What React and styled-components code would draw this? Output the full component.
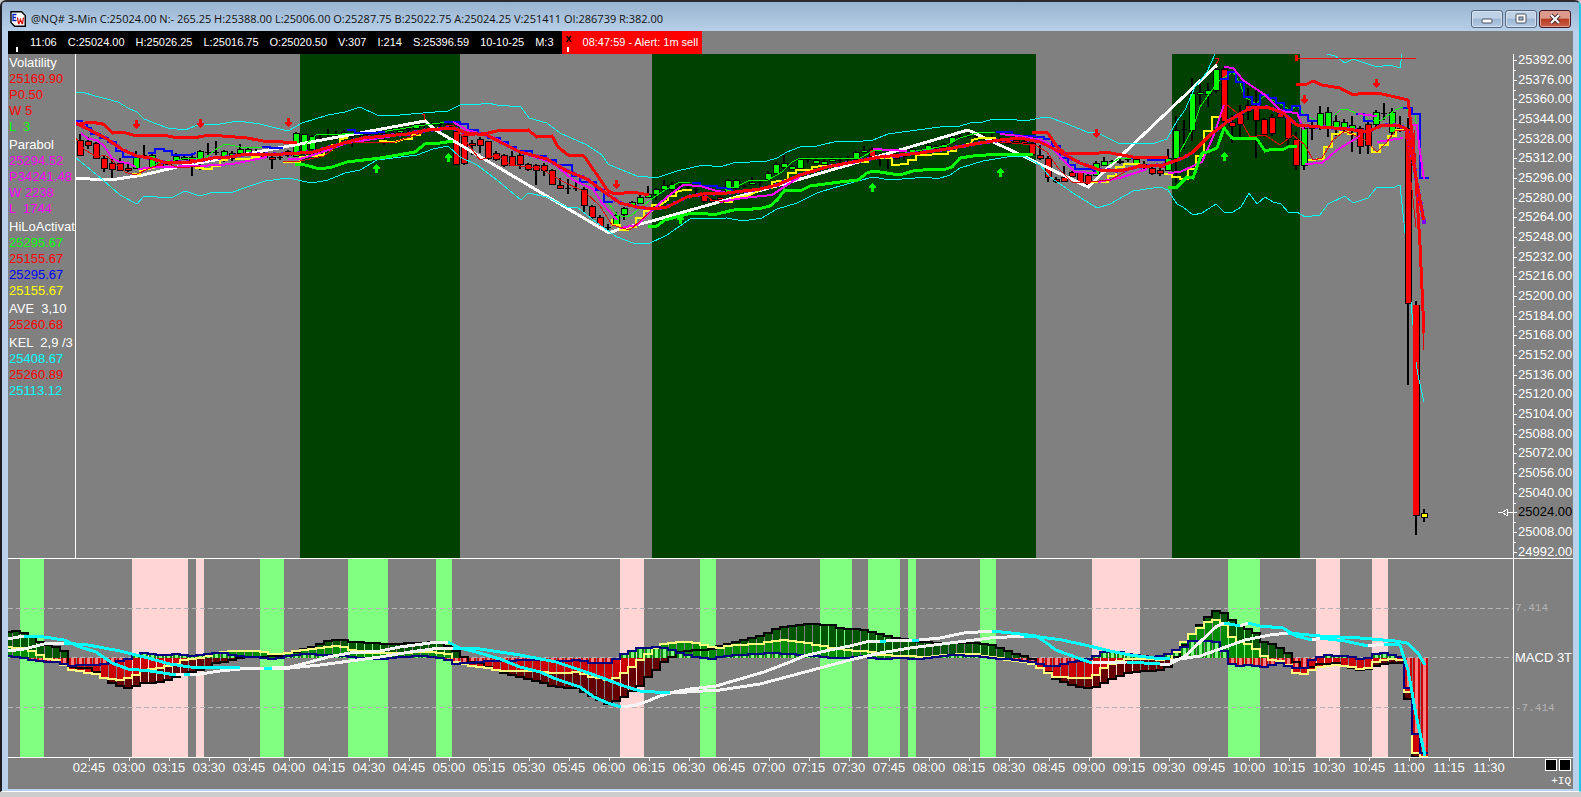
import React from 'react';
import styled, { createGlobalStyle } from 'styled-components';

const GlobalStyle = createGlobalStyle`
    * { box-sizing: border-box; }
    body {
        margin: 0;
        background: #cdcdcd;
        font-family: "Liberation Sans", Arial, sans-serif;
    }
    ul { margin: 0; padding: 0; list-style: none; }
`

const ticker = ['11:06', 'C:25024.00', 'H:25026.25', 'L:25016.75', 'O:25020.50', 'V:307', 'I:214', 'S:25396.59', '10-10-25', 'M:3'];

const studies = [
    { name: 'Volatility', rows: [['25169.90', '#f00'], ['P0.50', '#f00'], ['W 5', '#f00'], ['L  3', '#0f0']] },
    { name: 'Parabol', rows: [['25294.52', '#f0f'], ['P34241.48', '#f0f'], ['W 2238', '#f0f'], ['L  1744', '#f0f']] },
    { name: 'HiLoActivat', rows: [['25295.67', '#0f0'], ['25155.67', '#f00'], ['25295.67', '#00f'], ['25155.67', '#ff0']] },
    { name: 'AVE  3,10', rows: [['25260.68', '#f00']] },
    { name: 'KEL  2,9 /3', rows: [['25408.67', '#0ff'], ['25260.89', '#f00'], ['25113.12', '#0ff']] },
];

const prices = Array.from({ length: 26 }, (_, i) => 25392 - i * 16);

const times = Array.from({ length: 36 }, (_, i) => {
    const m = 165 + i * 15;
    return String(Math.floor(m / 60)).padStart(2, '0') + ':' + String(m % 60).padStart(2, '0');
});

// x, high, low, body top, body bottom, g(reen) / r(ed) / y(ellow) / d(oji)
const candles = `80 134 156 140 155 r|88 137 149 141 145 r|96 142 159 143 158 r|104 155 172 158 168 r|112 158 178 163 169 r|120 158 171 163 170 r|128 163 172 168 170 r|136 151 168 157 168 g|144 145 157 155 156 d|152 154 167 155 167 g|160 160 167 162 167 r|168 160 165 161 164 g|176 153 160 156 160 g|184 155 160 157 159 g|192 153 176 157 165 r|200 150 170 151 160 g|208 143 155 152 153 d|216 141 155 152 153 d|224 150 162 151 160 g|232 151 161 153 158 g|240 144 154 149 153 g|248 148 153 149 152 g|256 149 156 152 153 d|264 149 158 154 157 r|272 155 169 157 159 r|280 155 160 157 158 d|288 150 157 151 155 g|296 132 157 133 156 g|304 134 152 134 151 g|312 135 150 136 149 g|320 134 142 137 138 d|328 129 138 134 135 d|336 131 140 134 135 d|344 130 137 132 134 g|352 133 147 135 137 d|360 131 138 133 135 g|368 131 138 134 135 d|376 131 137 132 134 d|384 131 145 133 135 d|392 129 136 132 133 d|400 128 135 130 132 g|408 125 132 128 130 d|416 123 129 124 128 g|424 122 128 124 126 d|432 122 129 125 126 d|440 122 128 124 125 d|448 122 128 124 126 r|456 130 164 131 164 r|464 135 165 136 163 r|472 140 155 143 145 r|480 137 153 139 145 r|488 141 160 141 158 r|496 151 161 153 159 r|504 154 167 155 165 r|512 151 166 156 165 r|520 153 169 155 164 r|528 163 171 164 169 r|536 164 185 165 170 r|544 163 176 165 170 r|552 169 185 170 184 r|560 178 189 185 188 r|568 179 194 188 189 d|576 180 191 188 189 d|584 187 212 189 205 r|592 205 219 206 217 r|600 215 227 217 226 r|608 224 232 227 228 d|616 212 225 215 225 g|624 207 220 208 214 g|632 201 206 202 205 g|640 195 204 197 203 g|648 186 197 194 197 g|656 188 200 189 194 g|664 180 190 185 189 g|672 182 191 184 189 g|680 183 190 186 188 d|688 184 190 187 188 d|696 186 195 189 190 d|704 192 203 195 201 r|712 198 202 199 201 r|720 196 200 197 199 r|728 179 194 180 193 g|736 179 190 180 188 g|744 185 188 186 187 d|752 177 185 182 184 g|760 180 186 182 183 d|768 171 180 173 179 g|776 162 174 164 173 g|784 155 169 163 167 g|792 165 170 166 169 g|800 157 171 159 168 g|808 157 163 159 160 d|816 157 163 160 163 g|824 158 165 161 164 g|832 157 162 159 161 g|840 157 163 160 161 d|848 156 162 159 160 d|856 151 161 152 159 g|864 146 153 150 152 g|872 147 157 149 156 r|880 153 166 156 157 d|888 152 169 156 157 d|896 153 160 156 158 r|904 153 160 156 157 d|912 148 155 149 154 g|920 150 155 152 153 d|928 144 152 145 151 g|936 145 149 146 148 d|944 143 148 144 147 g|952 136 143 137 142 g|960 134 139 136 137 d|968 131 138 136 137 d|976 133 138 136 137 d|984 134 140 137 138 d|992 134 140 137 138 d|1000 137 143 139 141 r|1008 139 145 140 143 r|1016 139 143 140 142 r|1024 140 144 141 143 r|1032 142 154 143 154 r|1040 145 160 155 158 r|1048 156 182 158 177 r|1056 177 183 179 181 r|1064 166 182 177 181 r|1072 171 177 172 176 r|1080 172 182 172 182 r|1088 174 185 175 184 r|1096 161 176 163 175 g|1104 157 165 161 165 g|1112 160 165 161 162 d|1120 159 164 161 162 g|1128 157 162 159 160 d|1136 157 165 159 163 g|1144 161 170 164 165 d|1152 167 175 168 173 r|1160 168 176 170 173 r|1168 149 171 158 170 g|1176 116 183 130 158 g|1184 120 149 129 130 d|1192 78 141 93 130 g|1200 78 105 92 94 g|1208 83 107 90 94 g|1216 66 93 69 90 g|1224 67 123 69 121 r|1232 115 143 122 126 r|1240 105 138 114 124 r|1248 88 120 105 111 r|1256 90 158 107 120 r|1264 118 137 119 134 r|1272 114 136 117 133 r|1280 108 118 113 117 r|1288 115 145 118 138 r|1296 132 170 139 165 r|1304 125 170 128 165 g|1312 122 140 128 129 d|1320 106 130 113 127 g|1328 107 137 112 127 g|1336 115 136 121 127 g|1344 119 132 122 127 g|1352 116 152 125 129 g|1360 126 154 128 146 r|1368 122 154 124 145 r|1376 110 129 112 124 g|1384 103 120 113 114 d|1392 108 135 112 132 g|1400 116 132 128 129 d|1408 118 385 128 303 r|1416 301 535 305 515 r|1424 509 522 513 517 y`
    .split('|').map((c) => c.split(' '));

const fills = { g: '#00ff00', r: '#ff0000', y: '#ffff00', d: '#000' };

const keltner = [
    '75,92 82,92 95,96 107,99 118,102 128,108 137,112 144,119 157,124 168,128 185,130 200,124 220,124 238,121 260,124 272,127 288,131 302,123 328,115 345,112 360,107 377,115 400,115 423,113 448,111 462,104 475,105 488,103 497,105 521,107 529,118 547,123 560,133 587,145 602,155 608,164 617,168 637,176 648,177 656,178 677,171 703,165 720,167 733,163 767,161 777,158 787,152 800,147 817,146 838,141 853,142 873,140 888,134 917,130 940,127 960,126 970,123 983,122 993,119 1017,120 1025,121 1040,118 1048,117 1065,123 1087,132 1098,133 1120,144 1155,143 1167,139 1177,121 1185,110 1195,87 1207,72 1215,54',
    '1327,54 1335,56 1345,63 1353,59 1368,64 1377,67 1390,65 1400,68 1402,54',
    '75,157 103,180 120,195 137,204 144,196 157,197 173,197 185,191 200,196 210,193 233,192 247,187 265,181 288,178 312,183 328,180 345,173 360,170 377,160 417,155 433,149 448,146 460,157 477,165 497,180 521,200 528,193 547,197 567,207 577,207 597,223 617,237 633,243 648,244 667,235 690,219 727,218 743,221 762,218 777,209 797,203 817,193 833,188 858,181 873,177 890,180 927,177 937,179 950,175 960,168 983,161 1007,157 1024,156 1040,165 1050,177 1073,193 1097,208 1110,204 1133,191 1160,187 1168,190 1177,204 1183,207 1193,215 1202,213 1216,204 1224,212 1233,212 1241,207 1249,193 1257,204 1265,197 1273,202 1281,204 1289,213 1297,212 1305,217 1320,215 1328,204 1345,196 1353,203 1368,198 1377,187 1392,188 1400,185 1405,233',
    '1411,302 1413,325',
    '1416,362 1418,375 1424,402',
];

const volUpper = [
    '80,124 90,122 103,124 113,133 122,132 137,136 163,135 173,137 183,137 193,138 210,135 247,138 263,141 283,142 297,143',
    '462,135 488,133 497,131 528,130 537,137 552,136 558,147 568,155 584,156 595,172 608,191 615,194 633,192 649,195',
    '1032,132 1048,133 1057,147 1065,153 1093,154 1105,152 1133,157 1168,158',
    '1296,84 1307,84 1313,81 1322,85 1340,88 1353,95 1363,93 1382,94 1395,97 1408,100 1412,133 1416,180 1420,245 1424,333',
];

const volLower = [
    '295,164 305,165 320,169 332,167 347,162 380,158 398,155 415,152 425,144 440,143 453,141',
    '648,226 657,226 665,220 680,216 692,213 703,213 713,215 738,209 743,210 762,208 770,206 777,200 785,190 800,191 810,186 840,182 858,180 867,173 873,171 900,175 913,171 933,169 943,170 952,167 960,158 973,156 1000,154 1033,154',
    '1168,187 1177,187 1182,182 1187,177 1193,178 1202,153 1207,152 1217,148 1224,128 1232,138 1257,139 1265,151 1273,149 1282,150 1290,146 1297,147',
];

const zigzag = [
    '75,178 90,179 117,179 143,175 177,167 300,144 425,121 437,131 523,182 609,233 620,229 652,221 733,198 780,185 968,130 1040,164 1088,187 1217,65',
];

const average = [
    '75,123 88,129 107,139 123,150 137,156 150,158 163,162 192,162 213,158 230,157 247,154 283,154 300,153 313,152 330,147 347,142 363,138 407,134 427,130 453,128 467,133 487,135 500,142 520,152 547,159 567,171 587,179 600,189 620,203 637,207 653,209 667,207 687,197 703,194 727,193 760,189 777,185 800,175 827,167 853,162 880,157 920,153 953,148 980,143 1000,140 1020,138 1040,142 1060,152 1080,163 1100,170 1120,171 1137,167 1163,165 1183,158 1193,152 1210,135 1227,122 1243,112 1253,107 1267,107 1283,113 1297,125 1320,127 1347,129 1367,132 1383,125 1397,125 1407,129 1413,160 1417,183 1424,222',
];

const parabolic = [
    '81,133 88,139 97,140 105,147 112,158 120,162 128,163 136,167',
    '138,169 157,167 200,166 233,164 267,157',
    '288,159 300,159 323,152 347,143 387,137 427,130',
    '453,122 467,130 493,137 520,152 553,163 573,180 593,189 602,203 617,220',
    '620,228 637,225 650,212 667,197 683,185 700,186 717,191 725,192',
    '720,202 743,198 772,195 790,183 800,177',
    '873,149 907,151',
    '1000,134 1020,136 1040,140 1048,143 1063,160 1075,172 1097,173',
    '1098,182 1120,178 1147,169',
    '1168,173 1180,172 1202,162 1213,137 1224,105',
    '1224,67 1233,68 1243,80 1265,95 1280,110 1287,112 1297,113 1304,130',
    '1305,164 1322,163 1337,150 1360,136',
    '1358,114 1377,116',
    '1377,142 1403,138',
    '1410,125 1417,125 1419,145 1424,179',
];

const hiloTop = [
    '75,121 82,121 82,124 87,124 87,128 91,128 91,134 100,134 100,138 108,138 108,142 116,142 116,151 123,151 123,157 144,157',
    '148,153 155,153 155,149 164,149 164,151 172,151 172,155 190,155 196,153',
    '262,147 270,147 270,148 283,148',
    '347,130 355,130 355,133 372,133 385,132',
    '444,122 460,122 460,124 468,124 468,130 478,130 478,134 488,134 488,138 500,138 500,142 508,142 508,147 516,147 516,151 532,151 532,156 546,156 546,160 556,160 556,165 572,165 572,176 580,176 580,182 596,182 596,190 604,190 604,202 613,202',
    '692,183 700,183 700,186 717,186 717,188 725,188 733,190',
    '996,132 1012,132 1012,135 1028,136 1044,137 1044,139 1052,139 1052,146 1060,146 1060,158 1068,158 1068,165 1075,165 1075,169 1092,169 1096,172',
    '1131,158 1148,158 1148,160 1165,160',
    '1220,79 1228,79 1228,72 1236,72 1236,82 1244,82 1244,97 1252,97 1252,104 1260,104 1260,95 1268,95 1268,98 1276,98 1276,103 1284,103 1284,110 1292,110 1292,106 1300,106 1300,115 1308,115 1308,121 1317,121',
    '1356,114 1364,114 1364,121 1373,121',
    '1403,108 1412,108 1412,114 1420,114 1420,178 1429,178',
];

const hiloBottom = [
    '132,174 140,174 140,170 155,168',
    '195,168 203,168 203,169 212,169 212,166 220,166 220,160 228,160',
    '235,159 252,159 252,157 260,157',
    '283,162 300,162 300,157 324,155 324,150 332,150 332,145 340,145 340,139 348,138',
    '379,141 395,142 405,139 412,139 412,135 420,135 420,132 430,130 440,128',
    '612,219 612,225 620,225 620,230 628,230 628,227 636,227 636,218 644,218 644,211 652,211 652,205 660,205 668,200 668,196 676,196 676,192 684,190 692,190',
    '724,202 732,202 732,198 748,196 756,192 764,188 772,188 772,182 788,180 788,173 796,173 796,170 812,170 812,167 836,165 852,162 868,162 868,158 892,158 892,165 908,164 908,160 916,160 916,155 948,154 948,151 956,151 956,147 972,143 972,140 980,138 996,138',
    '1091,182 1108,182 1108,176 1116,176 1116,167 1124,167 1124,164 1140,164',
    '1164,174 1172,174 1172,177 1180,177 1180,179 1188,179 1188,169 1196,169 1196,156 1204,156 1204,131 1212,131 1212,117 1221,117',
    '1308,160 1324,159 1324,147 1332,147 1332,134 1340,134 1340,132 1348,132 1348,134 1356,134',
    '1372,146 1372,152 1380,152 1380,145 1388,145 1388,136 1396,136 1396,130 1404,130',
];

const thinGreen = [
    '150,167 160,162 190,158 205,158 215,150 225,144 240,147 265,148',
    '305,145 317,134 345,134 380,132 400,129 425,125 440,123 453,122',
    '608,202 617,215 625,217 632,215 650,200 665,190 678,183 690,182',
    '725,190 740,185 750,180 768,180 782,172 792,162 800,158 860,158 875,150 890,150',
    '905,153 945,146 960,138 980,132 995,132',
    '1108,165 1120,158 1133,158',
    '1180,152 1193,128 1200,107 1212,90 1220,80 1233,72 1240,83 1245,97 1256,104 1264,96 1280,104 1290,110 1297,106 1305,115 1315,120',
    '1333,117 1340,110 1347,109 1360,115 1370,121 1382,120 1395,110 1403,107 1415,115 1420,150 1424,175',
];

const thinRed = [
    '75,137 85,150 97,157 105,155 115,163 125,172 135,175 150,168 165,163 180,168 200,166',
    '283,162 300,161 324,156 340,144 365,142 395,142 425,132 453,125 465,140 480,160 497,155 510,165 540,168 560,180 585,192 600,206 612,225 630,230 650,212',
    '700,192 712,200 725,202',
    '1000,142 1035,145 1047,152 1058,168 1072,182 1088,182 1110,180 1140,164 1165,168',
    '1221,117 1226,104 1237,113 1250,137 1265,135 1280,145 1293,135 1305,145 1313,160 1322,158 1333,140 1345,131 1365,140 1377,152 1387,142 1395,131 1405,130 1412,190 1416,227',
    '1414,130 1418,220 1424,350',
];

const downArrows = [[136, 120], [200, 119], [288, 118], [616, 180], [1096, 129], [1304, 95], [1376, 79]];
const upArrows = [[376, 164], [448, 153], [680, 215], [872, 183], [1000, 168], [1224, 152]];

const macdBands = [
    [20, 24, 1], [132, 56], [196, 8], [260, 24, 1], [348, 40, 1], [436, 16, 1], [620, 24], [700, 16, 1],
    [820, 32, 1], [868, 32, 1], [908, 8, 1], [980, 16, 1], [1092, 48], [1228, 32, 1], [1316, 24], [1372, 16],
];

const parse = (s) => s.split(' ').map((p) => p.split(',').map(Number));

// value of a knot list at every 3 minute bar
function sample(knots) {
    const pts = parse(knots);
    const out = [];
    for (let x = 8; x <= 1424; x += 8) {
        let i = 1;
        while (i < pts.length - 1 && pts[i][0] < x) i++;
        const [x0, y0] = pts[i - 1];
        const [x1, y1] = pts[i];
        const t = Math.min(1, Math.max(0, (x - x0) / (x1 - x0)));
        out.push([x, Math.round(y0 + (y1 - y0) * t)]);
    }
    return out;
}

const slow = sample('8,632 16,631 24,633 32,637 40,642 48,645 60,648 64,651 72,667 88,668 96,672 104,678 112,683 120,686 128,688 136,686 144,683 160,682 168,680 176,677 184,674 200,670 208,667 216,663 232,660 245,657 290,656 300,650 316,646 324,642 332,640 345,640 352,642 370,643 390,644 410,643 440,642 448,646 456,651 464,657 472,662 480,663 490,668 504,673 520,677 536,681 556,687 575,688 584,692 592,696 600,700 608,704 616,701 624,697 632,691 640,686 648,677 656,670 664,662 672,657 680,652 696,650 712,649 720,646 740,641 752,638 764,635 772,631 780,627 796,626 804,624 832,625 840,628 864,630 880,634 896,638 920,642 940,643 980,643 992,645 1004,650 1016,654 1028,657 1036,660 1044,667 1052,677 1060,681 1072,685 1084,688 1092,688 1100,685 1108,681 1116,677 1124,674 1140,671 1164,670 1172,663 1180,650 1188,640 1196,628 1204,621 1212,612 1216,611 1224,613 1232,620 1240,626 1252,630 1256,633 1264,642 1276,645 1284,650 1292,656 1300,668 1312,667 1320,664 1336,663 1352,668 1364,671 1376,666 1390,663 1400,663 1408,699 1416,757 1424,757');
const mid = sample('8,647 24,648 36,653 48,659 60,661 68,669 80,671 96,674 104,678 120,680 132,677 136,675 145,670 160,668 176,664 184,660 200,658 220,652 240,651 260,651 272,654 288,653 300,650 320,648 340,646 352,650 370,653 400,653 430,652 448,654 456,662 464,664 476,667 488,668 500,671 540,671 556,673 580,672 592,677 604,679 612,680 620,676 628,670 640,660 648,654 656,648 664,644 680,642 692,642 704,645 720,648 732,645 760,644 768,642 780,640 796,641 812,644 828,647 844,650 868,651 880,655 900,656 930,657 945,655 960,654 976,654 992,657 1004,659 1020,661 1036,665 1044,671 1056,677 1088,678 1096,675 1104,668 1116,662 1130,659 1150,659 1164,661 1172,656 1180,647 1190,635 1200,628 1208,622 1218,620 1226,626 1232,637 1240,642 1252,645 1260,652 1268,660 1284,661 1296,673 1304,674 1312,670 1320,667 1336,665 1350,667 1360,669 1368,668 1376,662 1388,659 1402,660 1408,692 1416,753 1424,757');
const fast = sample('8,656 24,658 36,661 60,662 68,666 84,665 108,664 124,660 132,657 142,653 160,655 180,654 190,656 204,655 220,652 236,656 260,657 276,659 290,656 304,654 336,655 352,657 380,659 396,657 420,656 444,658 456,664 470,663 484,661 540,660 560,661 580,660 590,663 610,663 620,656 630,652 640,648 656,647 668,648 676,652 692,656 710,659 724,656 752,654 772,653 792,654 812,656 836,658 850,658 864,656 880,659 896,658 920,659 936,657 956,655 976,656 1000,659 1020,660 1040,664 1052,667 1060,665 1072,662 1088,659 1096,656 1104,652 1120,652 1132,655 1150,657 1164,656 1172,651 1184,647 1192,641 1204,641 1216,642 1224,651 1230,663 1240,666 1252,665 1264,667 1280,663 1292,668 1304,668 1314,658 1330,655 1350,657 1364,660 1372,655 1384,653 1396,656 1402,658 1408,688 1416,734 1424,753');

const ZERO = 658;

const stepPath = (pts) => pts.map(([x, y], i) => `${i ? 'L' : 'M'}${x - 4} ${y}H${x + 4}`).join('');

const cyanLines = [
    '24,636 44,637 64,640 80,647 96,652 112,663 128,669 150,671 176,675',
    '184,674 190,674', '264,668 272,668',
    '448,642 460,648 476,652 500,659 520,667 540,672 556,679 580,687 594,697 608,703 621,707',
    '880,641 886,641', '912,640 919,640',
    '992,631 1020,634 1036,636 1048,644 1056,650 1075,657 1092,663',
    '1127,662 1160,664',
    '1224,623 1240,626', '1248,623 1260,626 1283,628 1296,636 1312,640',
    '1320,638 1345,641 1368,646',
    '1384,644 1400,645 1408,670 1416,715 1425,756',
    '64,643 88,645 120,651 144,657 170,664 190,667 240,668',
    '453,648 480,649 500,652 520,655 556,662 580,670 600,677 624,686 640,691 670,693',
    '1024,636 1040,637 1062,640 1085,645 1110,651 1130,655 1154,658 1170,659',
    '1288,633 1320,636 1360,638 1395,641 1407,643 1418,653 1425,665',
];

const whiteLines = [
    '8,639 24,636', '176,675 184,674', '190,674 200,674 220,671 250,668 264,668',
    '272,668 290,667 310,662 328,657 350,653 380,651 400,647 430,643 448,642',
    '621,707 636,705 648,701 660,696 674,692 690,689 716,686 740,679 764,672 790,662 804,656 830,650 850,646 866,642 880,641',
    '886,641 912,640', '919,640 940,638 964,633 992,631',
    '1092,663 1127,662', '1160,664 1170,664 1185,656 1200,642 1217,626 1224,623', '1240,626 1248,623',
    '1312,640 1320,638', '1368,646 1384,644',
    '8,651 24,649 44,644 64,643',
    '240,668 290,668 320,665 350,661 380,657 410,652 440,648 453,648',
    '670,693 720,690 760,684 790,676 820,668 850,660 880,653 910,648 950,643 990,638 1024,636',
    '1170,661 1180,659 1200,656 1220,649 1245,640 1270,635 1288,633',
];

const Lines = ({ data, color, width }) => (
    <g fill="none" stroke={color} strokeWidth={width}>
        {data.map((points) => <polyline key={points} points={points} />)}
    </g>
)

const HistBar = ({ x, y, width, up, down }) => (
    <rect x={x - width / 2} y={Math.min(y, ZERO)} width={width} height={Math.abs(y - ZERO)} fill={y < ZERO ? up : down} />
)

const PriceChart = () => (
    <Plot viewBox="76 54 1437 504" preserveAspectRatio="none" role="img" aria-label="Price chart">
        <g fill="#004000">
            <rect x="300" y="54" width="160" height="504" />
            <rect x="652" y="54" width="384" height="504" />
            <rect x="1172" y="54" width="128" height="504" />
        </g>
        {candles.map(([x, high, low, top, bottom, kind]) => (
            <g key={x}>
                <rect x={x - 1} y={high} width="2" height={low - high} />
                <rect x={x - 3} y={top} width="6" height={Math.max(1, bottom - top)} fill={fills[kind]} stroke="#000" strokeWidth={kind === 'd' ? 0 : 1} />
            </g>
        ))}
        <Lines data={zigzag} color="#fff" width={3} />
        <Lines data={keltner} color="#00ffff" width={1} />
        <Lines data={thinGreen} color="#00ff00" width={1} />
        <Lines data={hiloTop} color="#0000ff" width={2} />
        <Lines data={hiloBottom} color="#ffff00" width={2} />
        <Lines data={parabolic} color="#ff00ff" width={2} />
        <Lines data={thinRed} color="#e00000" width={1} />
        <Lines data={volUpper} color="#ff0000" width={3} />
        <Lines data={volLower} color="#00ff00" width={3} />
        <g fill="none" stroke="#8000ff" strokeWidth="4" strokeDasharray="3 5">
            {average.map((points) => <polyline key={points} points={points} />)}
        </g>
        <Lines data={average} color="#ff0000" width={3} />
        <rect x="1413" y="305" width="6" height="210" fill="#ff0000" />
        <Lines data={keltner.slice(4)} color="#00ffff" width={1} />
        <rect x="1422" y="220" width="4" height="4" fill="#8000ff" />
        {downArrows.map(([x, y]) => (
            <path key={x} d={`M${x - 1} ${y}h3v4h2v1l-3 4h-1l-3 -4v-1h2z`} fill="#ff0000" />
        ))}
        {upArrows.map(([x, y]) => (
            <path key={x} d={`M${x - 1} ${y + 9}h3v-4h2v-1l-3 -4h-1l-3 4v1h2z`} fill="#00ff00" />
        ))}
        <path d="M422 114h2v6M1215 58h3v3l-2 3" fill="none" stroke="#ff0000" />
        <path d="M1295 55h3v6h-3zM1298 58h118v1h-118z" fill="#ff0000" />
        <path d="M1498 512.5h4l5 -3v6l-5 -3M1507 512.5h6" fill="none" stroke="#fff" />
    </Plot>
)

const MacdChart = () => (
    <Plot viewBox="8 559 1505 198" preserveAspectRatio="none" role="img" aria-label="MACD 3T">
        {macdBands.map(([x, width, up]) => (
            <rect key={x} x={x} y="559" width={width} height="198" fill={up ? '#80ff80' : '#ffd5d5'} />
        ))}
        <path d="M8 608.5H1513M8 657.5H1513M8 707.5H1513" stroke="#b4b4b4" strokeDasharray="5 3" />
        {slow.map(([x, y], i) => (
            <g key={x}>
                <HistBar x={x} y={y} width={7} up="#005500" down="#660000" />
                <HistBar x={x} y={mid[i][1]} width={7} up="#008c00" down="#cc0000" />
                <HistBar x={x} y={fast[i][1]} width={7} up="#008c00" down="#cc0000" />
                <HistBar x={x} y={fast[i][1]} width={3} up="#80ff80" down="#ff8080" />
            </g>
        ))}
        <g fill="none" strokeWidth="2">
            <path d={stepPath(slow)} stroke="#000" />
            <path d={stepPath(mid)} stroke="#ffff80" />
            <path d={stepPath(fast)} stroke="#000080" />
        </g>
        <Lines data={whiteLines} color="#f4f4f4" width={3} />
        <Lines data={cyanLines} color="#00ffff" width={3} />
    </Plot>
)

const App = () => (
    <Frame>
        <GlobalStyle />
        <TitleBar>
            <Logo viewBox="0 0 16 16" aria-hidden="true">
                <path d="M1 .75h10.500l3.750 3.750v10.750h-10.500l-3.750 -3.750z" fill="#fff" stroke="#000" strokeWidth="1.4" />
                <path d="M6.500 3.500H3v6h3.500M3 6.500h3" fill="none" stroke="#0020c0" strokeWidth="1.300" />
                <path d="M7.500 6.500l1 6h.5l1.500-4l1.500 4h.5l1-6" fill="none" stroke="#e01010" strokeWidth="1.300" />
            </Logo>
            <Title>@NQ# 3-Min C:25024.00 N:- 265.25 H:25388.00 L:25006.00 O:25287.75 B:25022.75 A:25024.25 V:251411 OI:286739 R:382.00</Title>
            <WindowButton aria-label="Minimize">
                <svg width="12" height="12"><rect x="1" y="6" width="10" height="4" rx="1" fill="#fff" stroke="#4a4f5c" /></svg>
            </WindowButton>
            <WindowButton aria-label="Maximize">
                <svg width="12" height="12">
                    <rect x="1" y="1" width="10" height="9" rx="1" fill="#fff" stroke="#4a4f5c" />
                    <rect x="4" y="4" width="4" height="3" fill="#a8c0da" stroke="#4a4f5c" />
                </svg>
            </WindowButton>
            <WindowButton aria-label="Close" $close>
                <svg width="12" height="12"><path d="M2 2l8 8M10 2l-8 8" stroke="#4a3038" strokeWidth="4" /><path d="M2 2l8 8M10 2l-8 8" stroke="#fff" strokeWidth="2" /></svg>
            </WindowButton>
        </TitleBar>
        <Client>
            <StatusRow>
                <Ticker>
                    <Handle />
                    {ticker.map((t) => <span key={t}>{t}</span>)}
                </Ticker>
                <Alert>
                    <Handle $close>x</Handle>
                    <span>08:47:59 - Alert: 1m sell</span>
                </Alert>
            </StatusRow>
            <PricePane>
                <Legend>
                    {studies.map((s) => (
                        <Study key={s.name}>
                            {s.name}
                            {s.rows.map(([text, color], i) => <Value key={i} $color={color}>{text}</Value>)}
                        </Study>
                    ))}
                </Legend>
                <PriceChart />
                <PriceAxis>
                    {prices.map((p) => <PriceLabel key={p} $last={p === 25024}>{p}.00</PriceLabel>)}
                </PriceAxis>
            </PricePane>
            <MacdPane>
                <MacdChart />
                <MacdAxis>
                    <Level>7.414</Level>
                    <MacdName>MACD 3T</MacdName>
                    <Level>-7.414</Level>
                </MacdAxis>
            </MacdPane>
            <Footer>
                <TimeAxis>
                    {times.map((t) => <TimeLabel key={t}>{t}</TimeLabel>)}
                </TimeAxis>
                <Corner>
                    <Squares><Square /><Square /></Squares>
                    +IQ
                </Corner>
            </Footer>
        </Client>
    </Frame>
)

const Frame = styled.div`
    height: calc(100vh - 5px);
    min-height: 500px;
    display: flex;
    flex-direction: column;
    padding: 0 6px 2px;
    background: #b9d1ea;
    border: 2px solid #1c1c24;
    border-top-color: #2b2b33;
    border-right: 2px solid #20c8e8;
    border-bottom: 1px solid #fff;
    border-radius: 6px 6px 0 0;
`

const TitleBar = styled.header`
    height: 29px;
    flex: none;
    display: flex;
    align-items: center;
    gap: 2px;
    margin: 0 -6px;
    padding: 4px 8px 0;
    background: linear-gradient(#99b4d1, #b7cfe8);
    border-radius: 4px 4px 0 0;
`

const Logo = styled.svg`
    width: 16px;
    height: 16px;
    flex: none;
`

const Title = styled.h1`
    flex: 1;
    margin: 0 0 0 3px;
    overflow: hidden;
    white-space: nowrap;
    color: #111;
    font-family: "Open Sans", "Segoe UI", sans-serif;
    font-size: 11px;
    font-weight: 400;
`

const WindowButton = styled.button`
    width: 32px;
    height: 18px;
    display: flex;
    align-items: center;
    justify-content: center;
    padding: 0;
    border: 1px solid ${(p) => (p.$close ? '#431422' : '#56687f')};
    border-radius: 3px;
    box-shadow: inset 0 0 0 1px ${(p) => (p.$close ? '#e0a090' : '#d4e2f2')};
    background: ${(p) => (p.$close
        ? 'linear-gradient(#dc9a8c 45%, #b83c20 50%, #c8604a)'
        : 'linear-gradient(#c0d2e6 45%, #9db7d3 50%, #b4cbe3)')};
`

const Client = styled.main`
    flex: 1;
    min-height: 0;
    display: flex;
    flex-direction: column;
    background: #808080;
    color: #fff;
    font-size: 13px;
`

const StatusRow = styled.div`
    height: 23px;
    flex: none;
    display: flex;
    font-size: 11px;
    line-height: 23px;
    white-space: nowrap;
`

const Ticker = styled.div`
    display: flex;
    gap: 11px;
    padding: 0 8px 0 7px;
    background: #000;
`

const Alert = styled.div`
    display: flex;
    gap: 11px;
    padding: 0 4px;
    background: #f00;
`

const Handle = styled.span`
    width: ${(p) => (p.$close ? '6px' : '4px')};
    color: #000;
    font-size: 11px;
    font-weight: 700;
    line-height: 14px;
    background: linear-gradient(#fff, #fff) 1px 16px / 2px 5px no-repeat;
`

const PricePane = styled.section`
    flex: 504 1 0;
    min-height: 0;
    display: flex;
`

const Legend = styled.ul`
    width: 68px;
    flex: none;
    overflow: hidden;
    padding: 1px 0 0 1px;
    border-right: 1px solid #fff;
    line-height: 16px;
    white-space: pre;
`

const Study = styled.li`
    margin-bottom: 2px;
`

const Value = styled.div`
    color: ${(p) => p.$color};
`

const Plot = styled.svg`
    display: block;
    flex: 1;
    min-width: 0;
    width: 100%;
    height: 100%;
    shape-rendering: crispEdges;
`

const PriceAxis = styled.ul`
    width: 60px;
    flex: none;
    display: flex;
    flex-direction: column;
    justify-content: space-between;
    border-left: 1px solid #fff;
    line-height: 12px;
`

const PriceLabel = styled.li`
    position: relative;
    padding-left: 4px;
    color: ${(p) => (p.$last ? '#000' : '#fff')};

    &::before, &::after {
        content: '';
        position: absolute;
        left: 0;
        top: 6px;
        width: 3px;
        height: 1px;
        background: #fff;
    }
    &::after {
        top: 16px;
        width: 2px;
    }
    &:last-child::after {
        display: none;
    }
`

const MacdPane = styled.section`
    flex: 198 1 0;
    min-height: 0;
    display: flex;
    border-top: 1px solid #fff;
`

const MacdAxis = styled.div`
    width: 60px;
    flex: none;
    display: flex;
    flex-direction: column;
    justify-content: space-between;
    padding: 41px 0 41px 1px;
    border-left: 1px solid #fff;
    line-height: 16px;
    white-space: nowrap;
`

const Level = styled.span`
    color: #b4b4b4;
    font-family: "Liberation Mono", "Courier New", monospace;
    font-size: 11px;
`

const MacdName = styled.span`
    font-size: 13px;
`

const Footer = styled.footer`
    height: 32px;
    flex: none;
    display: flex;
    border-top: 1px solid #fff;
`

const TimeAxis = styled.ul`
    flex: 1;
    display: flex;
    padding: 0 4px 0 61px;
`

const TimeLabel = styled.li`
    flex: 1;
    min-width: 0;
    text-align: center;
    line-height: 14px;

    &::before {
        content: '';
        display: block;
        width: 1px;
        height: 3px;
        margin: 0 auto;
        background: #fff;
    }
`

const Corner = styled.div`
    width: 60px;
    display: flex;
    flex-direction: column;
    align-items: flex-end;
    padding: 1px 2px 0;
    font-family: "Liberation Mono", "Courier New", monospace;
    font-size: 11px;
    line-height: 20px;
`

const Squares = styled.div`
    display: flex;
    gap: 2px;
`

const Square = styled.i`
    width: 12px;
    height: 12px;
    background: #000;
    border: 1px solid #fff;
`

export default App;
